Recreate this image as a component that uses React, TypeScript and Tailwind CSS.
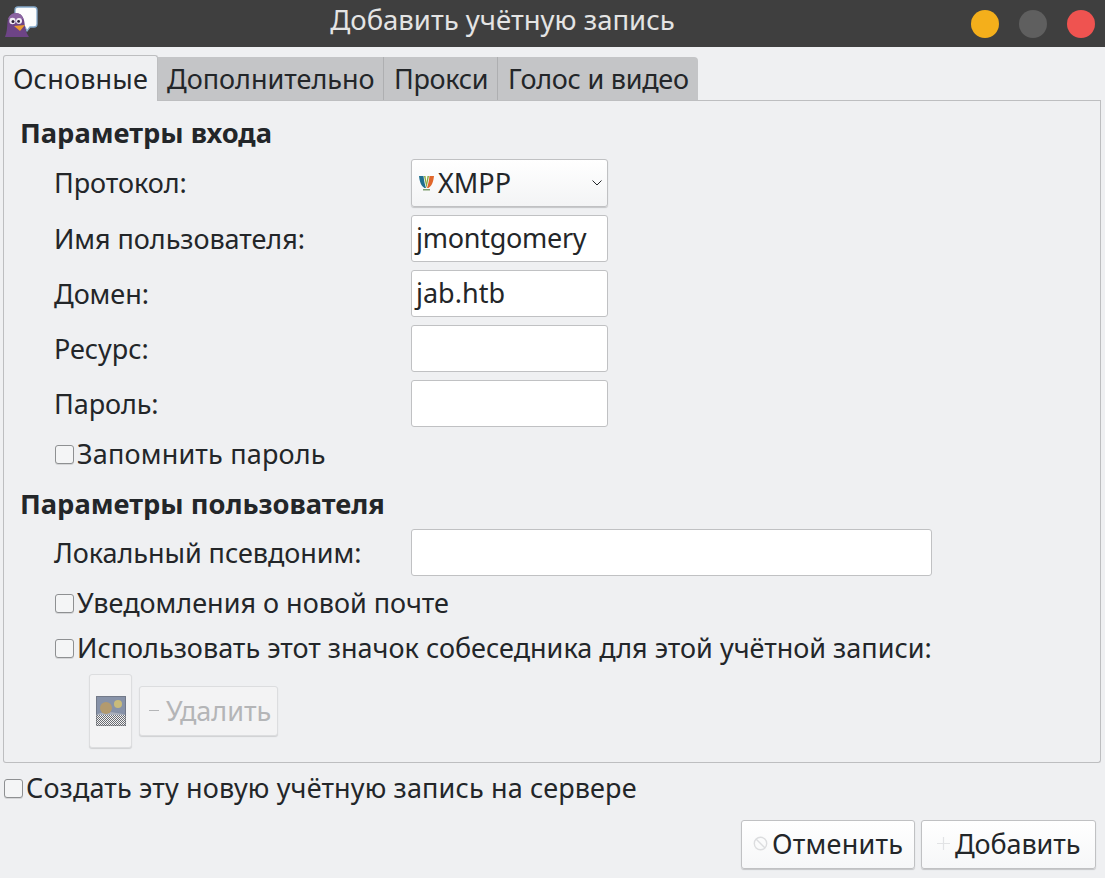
import React from "react";

function Check({ label, className = "", tracking = "" }: { label: string; className?: string; tracking?: string }) {
  return (
    <div className={`flex items-center h-[30px] ${className}`}>
      <span className="w-[19px] h-[19px] rounded-[3px] border border-[#8e9092] bg-[#f4f5f6] shadow-[0_1px_0_#d5d6d8] mr-[3px] shrink-0" />
      <span className={tracking}>{label}</span>
    </div>
  );
}

function Field({ label, value = "", w = "w-[197px]", h = "h-[47px]", className = "", valueClass = "" }: { label: string; value?: string; w?: string; h?: string; className?: string; valueClass?: string }) {
  return (
    <div className={`flex items-center ${className}`}>
      <span className="w-[356px] shrink-0 tracking-[-0.05px]">{label}</span>
      <div className={`${w} ${h} bg-white border border-[#c0c1c3] rounded-[3px] pl-[4px] pb-[2px] flex items-center ${valueClass}`}>{value}</div>
    </div>
  );
}

function Pidgin() {
  return (
    <svg width="40" height="38" viewBox="0 0 40 38" className="mt-[-1px]">
      <path d="M15 6 a3 3 0 0 1 3 -3 h16 a3 3 0 0 1 3 3 v14 a3 3 0 0 1 -3 3 h-4 l-3 4 l-2 -4 h-10 z" fill="#fdfdfd" stroke="#86aacb" strokeWidth="1.3" />
      <path d="M5 33 C7 28 7 24 7.5 18 C8 12 12 9 16 9 C21 9 24 13 24.5 19 C25 24 26 29 29 33 Z" fill="#6d4486" />
      <path d="M7.5 18 C8 12 12 9 16 9 C19 9 22 11 23.5 15 L8 15 Z" fill="#8c64a2" />
      <circle cx="12.5" cy="17" r="3.2" fill="#f2eef5" />
      <circle cx="19" cy="17" r="3" fill="#f2eef5" />
      <circle cx="13" cy="17.4" r="1.5" fill="#2c1e38" />
      <circle cx="18.6" cy="17.4" r="1.4" fill="#2c1e38" />
      <path d="M14 22 L25 21 L20 27 Z" fill="#ea9a2f" />
    </svg>
  );
}

function Xmpp() {
  return (
    <svg width="17" height="17" viewBox="0 0 17 17" className="shrink-0">
      <path d="M1 1 L5.5 1 C6 6 7 10 8 13 L6.5 13 C3 11 1.5 6 1 1 Z" fill="#1f6f8f" />
      <path d="M16 1 L11.5 1 C11 6 10 10 9 13 L10.5 13 C14 11 15.5 6 16 1 Z" fill="#e0662a" />
      <path d="M6 1 L8.5 13 L11 1 L9.5 1 L8.5 8 L7.5 1 Z" fill="#8aa83a" />
      <path d="M5 14 H12 V15.5 H5 Z" fill="#7f9f6f" />
    </svg>
  );
}

export default function App() {
  return (
    <div className="w-[1105px] h-[878px] bg-[#eff0f2] text-[#232629] text-[27px] leading-[36px] overflow-hidden flex flex-col" style={{ fontFamily: '"Noto Sans", sans-serif' }}>
      <header className="h-[47px] bg-[#3f3f3f] flex items-center relative shrink-0">
        <Pidgin />
        <div className="absolute left-0 right-[100px] top-[2px] text-center text-[#e4e4e4] text-[27.5px]">Добавить учётную запись</div>
        <div className="ml-auto flex gap-[20px] pr-[10px]">
          <span className="w-[28px] h-[28px] rounded-full bg-[#f4af1b]" />
          <span className="w-[28px] h-[28px] rounded-full bg-[#5f5f5f]" />
          <span className="w-[28px] h-[28px] rounded-full bg-[#ef5350]" />
        </div>
      </header>

      <div className="ml-[3px] mr-[4px] mt-[8px] flex flex-col">
        <div className="flex items-end h-[46px] border-b border-[#bdbec0] relative">
          <div className="h-[46px] w-[155px] bg-[#eff0f2] border border-b-0 border-[#bdbec0] rounded-t-[3px] text-center pt-[5px] -mb-[1px] relative z-10 tracking-[0.2px]">Основные</div>
          <div className="h-[43px] w-[226px] bg-[#c4c5c7] border-r border-[#aeafb1] pl-[9px] pt-[4px]">Дополнительно</div>
          <div className="h-[43px] w-[114px] bg-[#c4c5c7] border-r border-[#aeafb1] pl-[10px] pt-[4px] tracking-[-0.3px]">Прокси</div>
          <div className="h-[43px] w-[200px] bg-[#c4c5c7] rounded-tr-[4px] pl-[10px] pt-[4px] tracking-[-0.25px]">Голос и видео</div>
        </div>

        <div className="h-[662px] border border-t-0 border-[#bdbec0] rounded-b-[3px] px-[16px] pt-[14px]">
          <div className="font-bold h-[36px] text-[27.3px]">Параметры входа</div>
          <div className="pl-[35px] mt-[8px]">
            <div className="flex items-center">
              <span className="w-[356px] shrink-0 -ml-[1px] mr-[1px] tracking-[-0.05px]">Протокол:</span>
              <div className="w-[197px] h-[48px] rounded-[3px] border border-[#c0c1c3] shadow-[0_1px_1px_#c4c5c7] bg-gradient-to-b from-[#ffffff] to-[#f3f4f5] flex items-center pl-[6px]">
                <Xmpp />
                <span className="ml-[3px]">XMPP</span>
                <svg width="12" height="8" viewBox="0 0 12 8" className="ml-auto mr-[4px]"><path d="M1.5 1.5 L6 6 L10.5 1.5" fill="none" stroke="#232629" strokeWidth="1" /></svg>
              </div>
            </div>
            <Field label="Имя пользователя:" value="jmontgomery" valueClass="tracking-[-0.27px]" className="mt-[8px] -ml-[1px] [&>span]:mr-[1px]" />
            <Field label="Домен:" value="jab.htb" className="mt-[8px] -ml-[1px] [&>span]:mr-[1px]" />
            <Field label="Ресурс:" className="mt-[8px] -ml-[1px] [&>span]:mr-[1px]" />
            <Field label="Пароль:" className="mt-[8px] -ml-[1px] [&>span]:mr-[1px]" />
            <Check label="Запомнить пароль" tracking="tracking-[0.18px]" className="mt-[12px]" />
          </div>
          <div className="font-bold h-[36px] mt-[17px] text-[27.3px]">Параметры пользователя</div>
          <div className="pl-[35px] mt-[7px]">
            <Field label="Локальный псевдоним:" w="w-[521px]" className="-ml-[1px] [&>span]:mr-[1px]" />
            <Check label="Уведомления о новой почте" className="mt-[12px]" />
            <Check label="Использовать этот значок собеседника для этой учётной записи:" className="mt-[15px]" />
            <div className="flex items-center ml-[34px] mt-[11px] gap-[7px]">
              <div className="w-[43px] h-[74px] rounded-[3px] border border-[#dcdddf] bg-[#f3f3f4] shadow-[0_1px_1px_#cfd0d2] flex items-center justify-center">
                <svg width="30" height="30" viewBox="0 0 30 30">
                  <defs>
                    <pattern id="dither" width="2" height="2" patternUnits="userSpaceOnUse">
                      <rect width="2" height="2" fill="#f3f3f4" />
                      <rect width="1" height="1" fill="#6a6c72" />
                      <rect x="1" y="1" width="1" height="1" fill="#6a6c72" />
                    </pattern>
                  </defs>
                  <rect y="19" width="30" height="11" fill="url(#dither)" />
                  <rect y="0" width="30" height="19" fill="#8792a8" />
                  <path d="M0 19 C6 14 20 16 30 19 Z" fill="#a9afbb" />
                  <circle cx="22" cy="8" r="4" fill="#c9bb7a" />
                  <circle cx="10" cy="12" r="6" fill="#b39a6e" />
                  <rect x="0.5" y="0.5" width="29" height="29" fill="none" stroke="#5d6068" strokeDasharray="1 1" />
                </svg>
              </div>
              <div className="w-[139px] h-[50px] rounded-[3px] border border-[#dcdddf] bg-[#f3f3f4] shadow-[0_1px_1px_#cfd0d2] flex items-center text-[#b4b5b7] pl-[9px] pb-[1px]">
                <span className="w-[10px] h-[1px] bg-[#b4b5b7] mr-[7px]" />
                <span>Удалить</span>
              </div>
            </div>
          </div>
        </div>
      </div>

      <Check label="Создать эту новую учётную запись на сервере" tracking="tracking-[0.14px]" className="ml-[4px] mt-[10px]" />

      <div className="flex justify-end gap-[6px] pr-[9px] mt-[17px]">
        <div className="w-[174px] h-[49px] rounded-[3px] border border-[#c0c1c3] shadow-[0_1px_1px_#c4c5c7] bg-gradient-to-b from-[#ffffff] to-[#f6f7f8] flex items-center pl-[11px] pb-[2px]">
          <svg width="15" height="15" viewBox="0 0 15 15" className="mr-[4px]"><circle cx="7.5" cy="7.5" r="6.2" fill="none" stroke="#dcdddf" strokeWidth="1.4" /><path d="M3 3 L12 12" stroke="#dcdddf" strokeWidth="1.4" /></svg>
          <span className="tracking-[0.25px]">Отменить</span>
        </div>
        <div className="w-[175px] h-[49px] rounded-[3px] border border-[#c0c1c3] shadow-[0_1px_1px_#c4c5c7] bg-gradient-to-b from-[#ffffff] to-[#f6f7f8] flex items-center pl-[14px] pb-[2px]">
          <svg width="15" height="15" viewBox="0 0 15 15" className="mr-[4px]"><path d="M7.5 1 V14 M1 7.5 H14" stroke="#e2e3e5" strokeWidth="1.2" /></svg>
          <span className="tracking-[-0.1px]">Добавить</span>
        </div>
      </div>
    </div>
  );
}
